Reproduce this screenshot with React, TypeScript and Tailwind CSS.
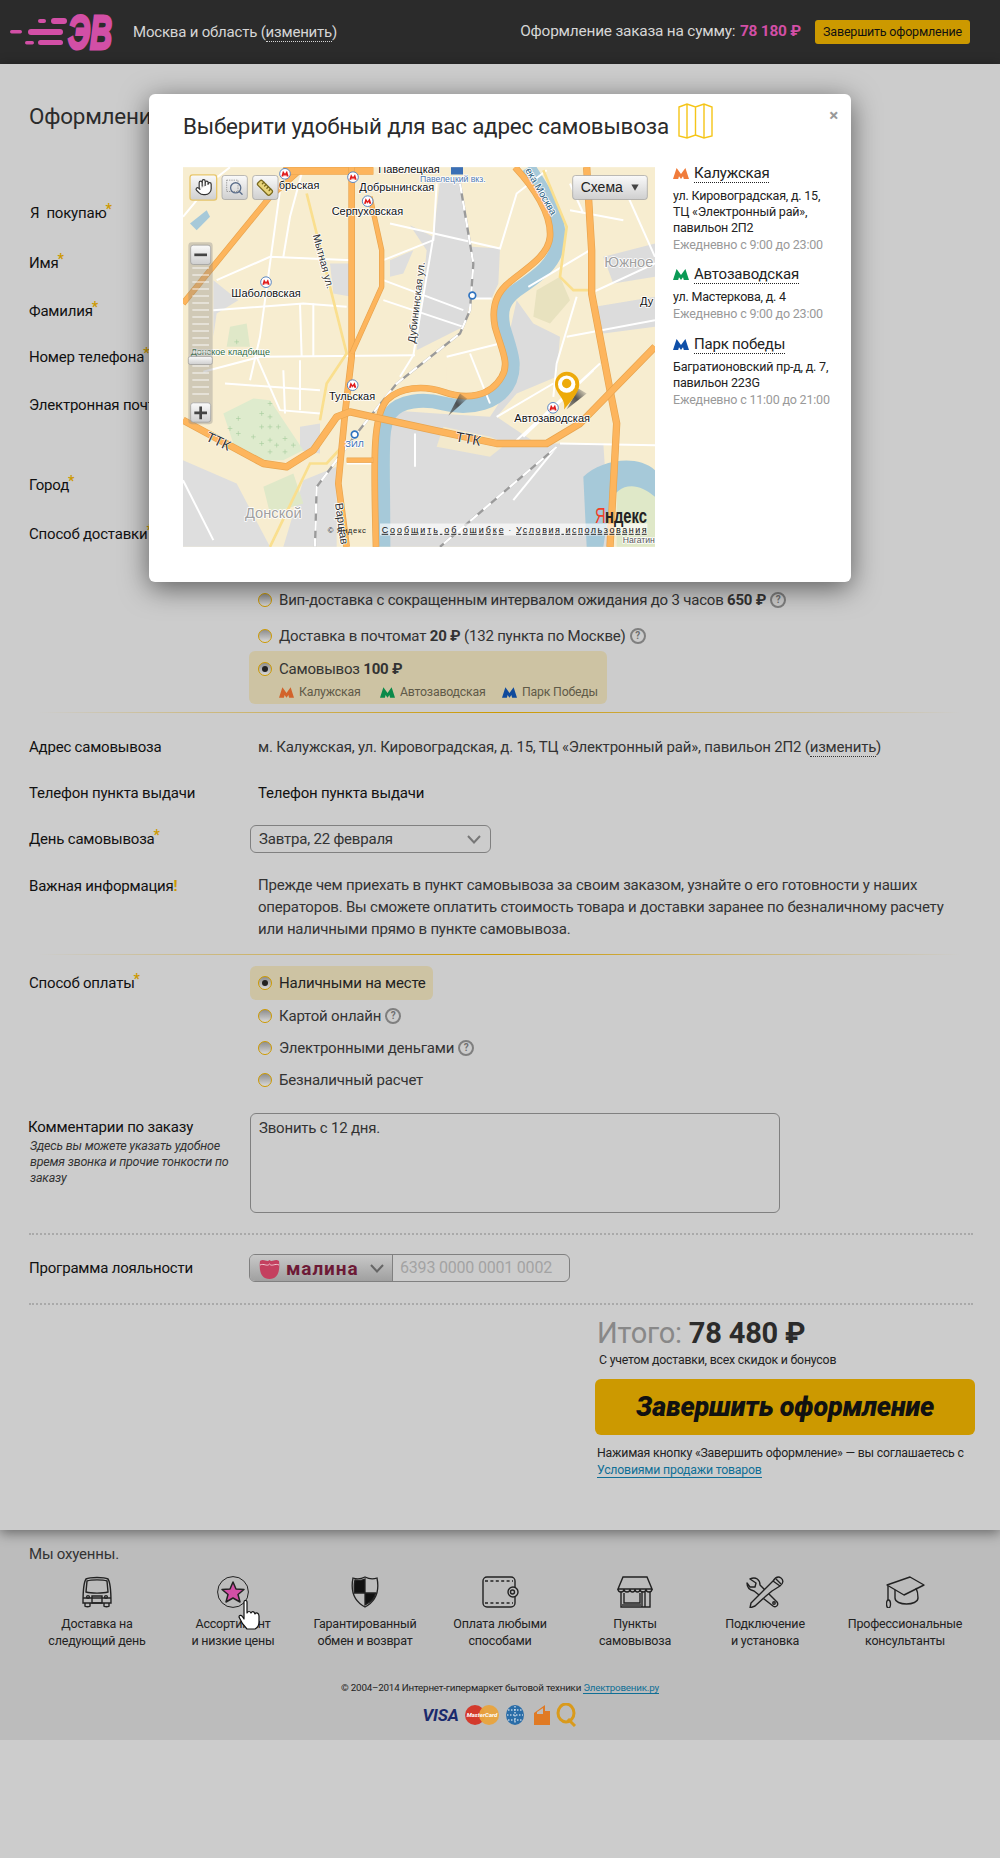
import { Hand, Search, Ruler } from 'lucide-react';
import React from 'react';

function Star() {
  return <sup className="ml-[-1px] text-[14px] font-bold top-[-4px] text-[#cc9900]">*</sup>;
}

function MetroIcon({ color, className }: { color: string; className?: string }) {
  return (
    <svg viewBox="0 0 16 11" className={className} fill={color}>
      <path d="M0 11 L3.6 0 L8 6 L12.4 0 L16 11 H10.8 L10 8.2 L8 11 L6 8.2 L5.2 11 Z" />
    </svg>
  );
}

function Radio({ checked }: { checked?: boolean }) {
  return (
    <span className="flex h-[14px] w-[14px] shrink-0 items-center justify-center rounded-full border border-[#cc9900] bg-gradient-to-b from-[#8f8f8f] to-[#d8d8d8]">
      {checked && <span className="h-[6px] w-[6px] rounded-full bg-[#222]" />}
    </span>
  );
}

function HelpMark() {
  return (
    <span className="-ml-[3px] flex h-[16px] w-[16px] items-center justify-center rounded-full border-2 border-[#7f7f7f] text-[10px] font-bold leading-none text-[#6f6f6f]">
      ?
    </span>
  );
}

function Road({ d, w = 12 }: { d: string; w?: number }) {
  return (
    <g fill="none" strokeLinejoin="round">
      <path d={d} stroke="#e8a44e" strokeWidth={w + 4} />
      <path d={d} stroke="#fdb55d" strokeWidth={w} />
    </g>
  );
}

function Metro({ x, y }: { x: number; y: number }) {
  return (
    <g>
      <circle cx={x} cy={y} r={16} fill="#fff" stroke="#5c86c0" strokeWidth={3} />
      <path
        d={`M${x - 11} ${y + 8} L${x - 6} ${y - 9} L${x} ${y} L${x + 6} ${y - 9} L${x + 11} ${y + 8} H${x + 5} L${x + 3} ${y + 2} L${x} ${y + 8} L${x - 3} ${y + 2} L${x - 5} ${y + 8} Z`}
        fill="#e01b1b"
      />
    </g>
  );
}

function Label({ x, y, children, size = 33, fill = '#111', anchor, rotate }: { x: number; y: number; children: string; size?: number; fill?: string; anchor?: 'middle'; rotate?: number }) {
  return (
    <text
      x={x}
      y={y}
      fontSize={size}
      fill={fill}
      textAnchor={anchor}
      stroke="#fff"
      strokeWidth={5}
      paintOrder="stroke"
      strokeLinejoin="round"
      transform={rotate ? `rotate(${rotate} ${x} ${y})` : undefined}
    >
      {children}
    </text>
  );
}

function MapPicture() {
  const whites = [
    'M39 200 L130 90 L180 51',
    'M330 120 L270 560 L240 690',
    'M140 390 L300 320 L545 330',
    'M130 480 L400 460 L530 470',
    'M100 665 L270 620 L735 615',
    'M260 620 L330 780 L450 790',
    'M165 700 L450 720',
    'M340 660 L345 790 M390 630 L390 780 M430 460 L430 620 M390 460 L395 620',
    'M640 330 L790 270 L800 100 M790 260 L730 615 L690 680',
    'M640 390 L880 480 M640 450 L880 530',
    'M660 220 L990 295 L1040 130 L1130 60',
    'M905 445 L965 445',
    'M830 620 L990 580 M900 610 L960 760',
    'M1075 410 L1260 300 M1260 430 L1455 340',
    'M1220 440 L1160 640 L1150 740',
    'M1190 560 L1455 510',
    'M1290 640 L1040 870 M1270 660 L1060 860',
    'M1170 880 L1455 885',
    'M980 800 L1150 700',
    'M1370 130 L1455 320',
    'M1200 100 L1240 190 M1200 180 L1360 210',
    'M39 990 L130 1170',
    'M1160 890 L1030 1050',
    'M735 850 L735 950',
    'M530 940 L610 940',
    'M400 51 L360 200 L340 320',
  ];
  const crosses = [
    [275, 790], [300, 760], [300, 800], [275, 830], [300, 830], [325, 830], [250, 860], [275, 880], [300, 870], [345, 865], [320, 885], [370, 885], [300, 905], [345, 905], [180, 835], [205, 805], [205, 850], [200, 575],
  ];
  return (
    <svg viewBox="39 51 1416 1139" className="h-[380px] w-[472px] shrink-0" fontFamily="Liberation Sans, sans-serif" letterSpacing="0">
      <defs>
        <linearGradient id="btn" x1="0" y1="0" x2="0" y2="1">
          <stop offset="0" stopColor="#fafafa" />
          <stop offset="1" stopColor="#cfcfcf" />
        </linearGradient>
        <linearGradient id="pinShadow" x1="1" y1="0" x2="0" y2="1">
          <stop offset="0" stopColor="#444" stopOpacity="0" />
          <stop offset="0.5" stopColor="#444" stopOpacity="0.9" />
          <stop offset="1" stopColor="#444" stopOpacity="0.5" />
        </linearGradient>
      </defs>
      <rect x="39" y="51" width="1416" height="1139" fill="#f7edd0" />
      <path d="M810 90 L870 90 L905 290 L990 295 L985 400 L965 445 L905 445 L880 530 L740 600 L770 300 L720 225 L790 260 Z" fill="#dcdcdc" />
      <path d="M130 390 L205 450 L140 490 L130 560 Z M480 340 L545 340 L545 440 L490 430 Z M660 330 L730 300 L700 370 L660 380 Z" fill="#dedede" />
      <path d="M1040 450 L1090 520 L1170 560 L1160 680 L1040 730 L980 800 L1100 880 L1300 880 L1320 1190 L660 1190 L660 780 L800 790 L960 800 L1000 740 L1050 650 L1020 540 Z" fill="#dcdcdc" />
      <path d="M39 930 L200 1000 L300 1190 L39 1190 Z M390 830 L450 820 L450 910 L390 900 Z M400 990 L500 950 L500 1190 L340 1190 Z" fill="#dedede" />
      <path d="M1300 320 L1455 280 L1455 380 L1330 400 Z M1275 470 L1455 440 L1455 530 L1300 550 Z" fill="#dcdcdc" />
      <path d="M830 650 L980 620 L1000 680 L950 730 L880 750 L830 720 Z" fill="#f7edd0" />
      <path d="M820 830 L960 860 L1010 880 L960 920 L800 890 Z" fill="#f3e9cc" />
      <path d="M160 790 L250 745 L300 750 L400 900 L340 930 L280 930 L190 880 Z" fill="#deebcd" />
      <path d="M180 530 L230 520 L240 590 L170 590 Z M280 1010 L370 970 L400 1060 L300 1090 Z M1340 1000 L1455 990 L1455 1190 L1340 1190 Z" fill="#dfe8c8" />
      {crosses.map(([x, y]) => (
        <path key={`${x}-${y}`} d={`M${x - 7} ${y} H${x + 7} M${x} ${y - 7} V${y + 7}`} stroke="#a9cfa0" strokeWidth="2" />
      ))}
      <path d="M1100 420 L1170 380 L1200 450 L1140 520 L1090 500 Z" fill="#e8e2bf" />
      <path d="M60 220 L110 180 L120 200 L80 240 Z" fill="#a6c9d9" />
      <path d="M1240 980 C1290 930 1400 910 1455 960 L1455 1040 C1400 990 1340 1000 1320 1060 L1300 1190 L1250 1190 Z" fill="#a6c9d9" />
      <path d="M1075 51 C1120 120 1170 190 1165 270 C1160 340 1100 380 1040 420 C1000 450 990 480 1000 530 C1020 600 1040 640 1020 690 C990 760 900 780 820 760 C760 745 690 750 660 790 C630 830 640 900 640 1190" fill="none" stroke="#a6c9d9" strokeWidth={42} />
      {whites.map((d) => (
        <path key={d} d={d} fill="none" stroke="#fff" strokeWidth={6} />
      ))}
      <path d="M870 100 L910 340 L900 480 L870 550 L680 700 L560 850 L440 1010 L435 1190" fill="none" stroke="#9a9a9a" strokeWidth={7} />
      <path d="M870 100 L910 340 L900 480 L870 550 L680 700 L560 850 L440 1010 L435 1190" fill="none" stroke="#fff" strokeWidth={7} strokeDasharray="30 22" />
      <path d="M1160 890 L810 1190" fill="none" stroke="#9a9a9a" strokeWidth={7} />
      <path d="M1160 890 L810 1190" fill="none" stroke="#fff" strokeWidth={7} strokeDasharray="30 22" />
      <g fill="none" stroke="#fadf8e" strokeWidth={8}>
        <path d="M410 130 L530 610 L470 700 L450 810" />
        <path d="M525 880 L470 940 L420 940 L300 1190" />
        <path d="M1120 60 L1190 230 L1170 380 L1210 420 L1260 420" />
      </g>
      <Road d="M39 460 L300 140 L400 51" w={14} />
      <Road d="M340 62 L610 62" w={20} />
      <Road d="M545 51 L545 620 L525 790 L505 1000 L530 1190" w={16} />
      <Road d="M600 140 L635 300 L635 410 L545 610" />
      <Road d="M1035 51 C1090 110 1145 190 1140 260 C1135 320 1060 360 1020 395 C975 430 965 480 975 530 C995 600 1020 640 995 680 C960 740 890 750 820 725 C760 705 690 710 650 750 C610 800 610 900 618 1190" w={16} />
      <Road d="M1250 51 L1265 300 L1265 430 L1320 720 L1340 820 L1320 1190" w={18} />
      <Road d="M530 930 L610 930" />
      <Road d="M39 810 L280 940 L350 950 L430 900 L500 800 L540 785 L790 840 L980 880 L1130 880 L1230 820 L1455 590" w={18} />
      <path d="M870 730 L892 746 L835 797 Z" fill="url(#pinShadow)" />
      <Metro x={345} y={71} />
      <Metro x={549} y={81} />
      <Metro x={593} y={153} />
      <Metro x={288} y={396} />
      <Metro x={548} y={705} />
      <Metro x={1149} y={773} />
      <rect x="843" y="51" width="36" height="22" fill="#3b6fb5" />
      <Label x={625} y={68}>Павелецкая</Label>
      <Label x={326} y={117}>брьская</Label>
      <Label x={568} y={122}>Добрынинская</Label>
      <Label x={485} y={196}>Серпуховская</Label>
      <Label x={184} y={440}>Шаболовская</Label>
      <Label x={477} y={749}>Тульская</Label>
      <Label x={1033} y={817}>Автозаводская</Label>
      <Label x={750} y={97} size={26} fill="#4f78b0">Павелецкий вкз.</Label>
      <Label x={428} y={255} size={32} fill="#333" rotate={75}>Мытная ул.</Label>
      <Label x={735} y={580} size={32} fill="#333" rotate={-83}>Дубининская ул.</Label>
      <Label x={1065} y={60} size={30} fill="#1f5c80" rotate={60}>ека Москва</Label>
      <Label x={62} y={614} size={27} fill="#2f6b3c">Донское кладбище</Label>
      <Label x={526} y={892} size={28} fill="#3b6fb5">ЗИЛ</Label>
      <Label x={495} y={1060} size={34} fill="#333" rotate={82}>Варшав</Label>
      <Label x={1303} y={352} size={44} fill="#a0a0a0">Южное</Label>
      <Label x={1410} y={466} size={33}>Ду</Label>
      <Label x={225} y={1105} size={44} fill="#a0a0a0">Донской</Label>
      <Label x={1358} y={1180} size={26} fill="#555">Нагатин</Label>
      <text x="105" y="870" fontSize="42" fill="#333" stroke="#fff" strokeWidth="3" paintOrder="stroke" transform="rotate(25 105 870)">ТТК</text>
      <text x="855" y="873" fontSize="42" fill="#333" stroke="#fff" strokeWidth="3" paintOrder="stroke" transform="rotate(10 855 873)">ТТК</text>
      <circle cx="907" cy="436" r="10" fill="#fff" stroke="#2f73c0" strokeWidth="5" />
      <circle cx="554" cy="853" r="10" fill="#fff" stroke="#2f73c0" strokeWidth="5" />
      <path d="M1225 715 L1250 730 L1190 777 Z" fill="url(#pinShadow)" />
      <path d="M1190 665 C1170 665 1155 682 1155 702 C1155 730 1190 745 1182 778 C1195 760 1228 730 1228 702 C1228 682 1212 665 1190 665 Z" fill="#edaa0a" />
      <circle cx="1190" cy="702" r="26" fill="#fff" />
      <circle cx="1190" cy="700" r="14" fill="#edaa0a" />
      <rect x="630" y="1120" width="802" height="36" fill="#fff" opacity="0.65" />
      <text x="473" y="1148" fontSize="23" fill="#222" letterSpacing="2">© Яндекс</text>
      <text x="635" y="1148" fontSize="27" fill="#111" textDecoration="underline" textLength="366">Сообщить об ошибке</text>
      <text x="1015" y="1148" fontSize="27" fill="#555">·</text>
      <text x="1038" y="1148" fontSize="27" fill="#111" textDecoration="underline" textLength="392">Условия использования</text>
      <text x="1275" y="1118" fontSize="66" fontWeight="400" fill="#f0402a" textLength="32" lengthAdjust="spacingAndGlyphs">Я</text>
      <text x="1305" y="1118" fontSize="60" fontWeight="700" fill="#222" textLength="126" lengthAdjust="spacingAndGlyphs">ндекс</text>

      <g stroke="#9c9c9c" strokeWidth="2">
        <rect x="60" y="74" width="80" height="76" rx="8" fill="url(#btn)" stroke="#e8c66a" strokeWidth="4" />
        <rect x="156" y="76" width="76" height="72" rx="8" fill="url(#btn)" />
        <rect x="248" y="76" width="76" height="72" rx="8" fill="url(#btn)" />
        <rect x="1208" y="76" width="224" height="72" rx="8" fill="url(#btn)" />
      </g>
      <Hand x={74} y={84} width={54} height={54} strokeWidth={1.6} color="#333" fill="#fff" />
      <rect x="170" y="90" width="34" height="34" fill="none" stroke="#777" strokeWidth="2" strokeDasharray="4 3" />
      <Search x={176} y={92} width={46} height={46} strokeWidth={2} color="#5a6d8a" />
      <Ruler x={258} y={86} width={54} height={54} strokeWidth={1.8} color="#7a6a1f" fill="#e8d47a" />
      <text x="1232" y="127" fontSize="42" fill="#222">Схема</text>
      <path d="M1384 103 H1406 L1395 122 Z" fill="#444" />
      <rect x="55" y="276" width="73" height="546" rx="10" fill="#888" opacity="0.35" />
      {Array.from({ length: 19 }, (_, i) => (
        <rect key={i} x="67" y={352 + i * 21} width="50" height="3" fill="#fff" opacity="0.9" />
      ))}
      <rect x="62" y="285" width="60" height="58" rx="8" fill="url(#btn)" stroke="#999" strokeWidth="2" />
      <rect x="73" y="310" width="38" height="8" fill="#444" />
      <rect x="62" y="758" width="60" height="58" rx="8" fill="url(#btn)" stroke="#999" strokeWidth="2" />
      <path d="M73 784 H111 V792 H73 Z M88 769 H96 V807 H88 Z" fill="#444" />
      <rect x="55" y="619" width="72" height="24" rx="6" fill="url(#btn)" stroke="#999" strokeWidth="2" />
    </svg>
  );
}

function Stop({ color, name, lines, hours, className }: { color: string; name: string; lines: string[]; hours: string; className?: string }) {
  return (
    <div className={className}>
      <div className="flex h-[22px] items-center text-[15px] text-[#222]">
        <MetroIcon color={color} className="mr-[5px] h-[11px] w-[16px]" />
        <span className="border-b border-dotted border-[#222] leading-[18px]">{name}</span>
      </div>
      <div className="mt-[4px] whitespace-nowrap text-[12.5px] leading-[16px] text-[#222]">
        {lines.map((l) => (
          <div key={l}>{l}</div>
        ))}
        <div className="mt-[1px] text-[#999]">{hours}</div>
      </div>
    </div>
  );
}

function Modal() {
  return (
    <div className="absolute left-[149px] top-[94px] z-20 h-[488px] w-[702px] rounded-md bg-white pl-[34px] shadow-[0_6px_28px_rgba(0,0,0,0.55)]">
      <span className="absolute right-[13px] top-[9px] text-[17px] font-bold text-[#999]">×</span>
      <div className="flex h-[73px] items-start">
        <h2 className="mt-[16px] whitespace-nowrap text-[22.4px] leading-[32px] text-[#2b2b2b]">Выберити удобный для вас адрес самовывоза</h2>
        <svg viewBox="0 0 35 36" className="ml-[9px] mt-[9px] h-[36px] w-[35px]" fill="none" stroke="#f5c518" strokeWidth="1.4">
          <path d="M1 4 L9 1 L17.5 4 L26 1 L34 4 V33 L26 35 L17.5 32 L9 35 L1 33 Z M9 1 V35 M17.5 4 V32 M26 1 V35" />
        </svg>
      </div>
      <div className="flex">
        <MapPicture />
        <div className="ml-[18px] w-[165px]">
          <Stop color="#f07c3c" name="Калужская" lines={['ул. Кировоградская, д. 15,', 'ТЦ «Электронный рай»,', 'павильон 2П2']} hours="Ежедневно с 9:00 до 23:00" className="-mt-[5px]" />
          <Stop color="#0a9a55" name="Автозаводская" lines={['ул. Мастеркова, д. 4']} hours="Ежедневно с 9:00 до 23:00" className="mt-[10px]" />
          <Stop color="#0f4fa8" name="Парк победы" lines={['Багратионовский пр-д, д. 7,', 'павильон 223G']} hours="Ежедневно с 11:00 до 21:00" className="mt-[11px]" />
        </div>
      </div>
    </div>
  );
}

function FieldLabel({ children, mark }: { children: React.ReactNode; mark?: boolean }) {
  return (
    <div className="w-[229px] shrink-0 text-[15px] leading-[24px] text-[#111]">
      {children}
      {mark && <Star />}
    </div>
  );
}

function Divider({ className }: { className: string }) {
  return <div className={`h-px bg-gradient-to-r from-transparent via-[#cc9900] to-transparent ${className}`} />;
}

function Dotted({ className }: { className: string }) {
  return <div className={`h-[2px] border-t-2 border-dotted border-[#a9a9a9] ${className}`} />;
}

function RadioRow({ checked, children, className }: { checked?: boolean; children: React.ReactNode; className?: string }) {
  return (
    <div className={`ml-[229px] flex h-[24px] items-center gap-[7px] text-[15px] text-[#333] ${className ?? ''}`}>
      <Radio checked={checked} />
      {children}
    </div>
  );
}

function BusIcon() {
  return (
    <svg viewBox="0 0 32 32" className="h-[32px] w-[32px]" fill="none" stroke="#222" strokeWidth="1.4">
      <path d="M5 3 C9 1 23 1 27 3 C29 6 30 12 30 27 H2 C2 12 3 6 5 3 Z" />
      <path d="M6 5 C10 3.5 22 3.5 26 5 L27 16 C22 17.5 10 17.5 5 16 Z" />
      <path d="M11 20 H21 V27 H11 Z M2 22 H30" />
      <circle cx="7" cy="21" r="1.4" />
      <circle cx="25" cy="21" r="1.4" />
      <path d="M4 27 V30 C4 31 9 31 9 30 V27 M23 27 V30 C23 31 28 31 28 30 V27" />
    </svg>
  );
}

function StarIcon() {
  return (
    <svg viewBox="0 0 32 32" className="h-[32px] w-[32px]" fill="none" stroke="#222" strokeWidth="1">
      <circle cx="16" cy="16" r="15.4" />
      <path d="M16 6 L19 13 L27 13.5 L21 18.5 L23 26 L16 22 L9 26 L11 18.5 L5 13.5 L13 13 Z" fill="#d24fa6" stroke="#222" strokeWidth="1.5" strokeLinejoin="round" />
    </svg>
  );
}

function ShieldIcon() {
  return (
    <svg viewBox="0 0 28 32" className="h-[32px] w-[28px]" fill="none" stroke="#222" strokeWidth="1.3">
      <path d="M14 1 C18 3 23 3 26 2 C28 12 27 24 14 31 C1 24 0 12 2 2 C5 3 10 3 14 1 Z" />
      <path d="M14 3 V17 H3.5 C3 12 3 8 4 4 C7 4.5 11 4.5 14 3 Z M14 17 H24.5 C24 22 20 26 14 29 Z" fill="#111" />
    </svg>
  );
}

function WalletIcon() {
  return (
    <svg viewBox="0 0 37 32" className="h-[32px] w-[37px]" fill="none" stroke="#222" strokeWidth="1.4">
      <rect x="1" y="1" width="32" height="30" rx="4" />
      <path d="M3 5 H31 M3 27 H31" strokeDasharray="3 2.4" />
      <rect x="26" y="11" width="10" height="10" rx="5" fill="#bcbcbc" />
      <circle cx="30.5" cy="16" r="2" />
    </svg>
  );
}

function ShopIcon() {
  return (
    <svg viewBox="0 0 36 32" className="h-[32px] w-[36px]" fill="none" stroke="#222" strokeWidth="1.4">
      <path d="M6 1 H30 L35 13 H1 Z" />
      <path d="M1 13 C1 17 7 17 7 13 C7 17 13 17 13 13 C13 17 18 17 18 13 C18 17 23 17 23 13 C23 17 29 17 29 13 C29 17 35 17 35 13" />
      <path d="M4 16 V31 H33 V16 M7 17 V27 H23 V17 M25 15 V31 M28 16 V31" />
      <path d="M5 29 H24" />
    </svg>
  );
}

function ToolsIcon() {
  return (
    <svg viewBox="0 0 38 32" className="h-[32px] w-[38px]" fill="none" stroke="#222" strokeWidth="1.4" strokeLinejoin="round">
      <path d="M4 3 L10 7 L9 11 L4 11 L1 7 C1 11 3 14 8 15 L27 30 C30 32 33 29 31 26 L14 9 C14 4 10 0 4 3 Z" />
      <circle cx="28" cy="27" r="1.2" />
      <path d="M35 2 C38 4 37 8 34 10 L26 15 L20 20 L9 30 L4 32 L5 27 L15 17 L21 11 L27 5 C29 2 32 0 35 2 Z" fill="#bcbcbc" />
      <path d="M27 5 L34 10 M30 3 L35 8" />
    </svg>
  );
}

function CapIcon() {
  return (
    <svg viewBox="0 0 39 32" className="h-[32px] w-[39px]" fill="none" stroke="#222" strokeWidth="1.4" strokeLinejoin="round">
      <path d="M1 9 L24 1 L38 9 L18 19 Z" />
      <path d="M9 14 V22 C9 30 32 30 32 22 C32 18 31 14 30 12" />
      <path d="M2 10 V24" />
      <ellipse cx="2.5" cy="28" rx="2" ry="4" />
    </svg>
  );
}

const perks = [
  { icon: <BusIcon />, lines: ['Доставка на', 'следующий день'] },
  { icon: <StarIcon />, lines: ['Ассортимент', 'и низкие цены'] },
  { icon: <ShieldIcon />, lines: ['Гарантированный', 'обмен и возврат'] },
  { icon: <WalletIcon />, lines: ['Оплата любыми', 'способами'] },
  { icon: <ShopIcon />, lines: ['Пункты', 'самовывоза'] },
  { icon: <ToolsIcon />, lines: ['Подключение', 'и установка'] },
  { icon: <CapIcon />, lines: ['Профессиональные', 'консультанты'] },
];

function Logo() {
  return (
    <svg viewBox="0 0 115 64" className="h-[64px] w-[115px] shrink-0" fill="#d24fa6">
      <rect x="10" y="30" width="12" height="3.5" rx="1.7" />
      <rect x="28" y="29" width="35" height="6" rx="3" />
      <rect x="38" y="19" width="8" height="4" rx="2" />
      <rect x="51" y="18" width="16" height="6" rx="3" />
      <rect x="25" y="41" width="9" height="3.5" rx="1.7" />
      <rect x="38" y="40" width="25" height="5" rx="2.5" />
      <text x="68" y="49" fontSize="48" fontWeight="700" fontStyle="italic" fontFamily="Liberation Sans, sans-serif" stroke="#d24fa6" strokeWidth="3" textLength="44" lengthAdjust="spacingAndGlyphs">ЭВ</text>
    </svg>
  );
}

export default function App() {
  return (
    <div className="relative min-h-[1858px] bg-[#cccccc] font-[Roboto,sans-serif] tracking-[-0.2px] text-[#222]">
      <header className="flex h-16 items-center bg-[#2b2b2b] pr-[30px]">
        <Logo />
        <div className="ml-[18px] text-[15px] text-[#d6d6d6]">
          Москва и область (<span className="border-b border-dotted border-[#d6d6d6]">изменить</span>)
        </div>
        <div className="ml-auto text-[15.4px] text-[#d6d6d6]">
          Оформление заказа на сумму: <b className="ml-[1px] font-bold text-[#d24fa6]">78 180 ₽</b>
        </div>
        <button className="ml-[14px] h-[24px] w-[155px] whitespace-nowrap rounded-[3px] bg-[#cc9900] text-[12.5px] text-[#111]">Завершить оформление</button>
      </header>

      <main className="relative z-10 h-[1466px] bg-[#cccccc] px-[29px] pt-[36px] shadow-[0_3px_12px_rgba(0,0,0,0.45)]">
        <h1 className="text-[22.4px] leading-[32px] text-[#2b2b2b]">Оформление заказа</h1>
        <div className="mt-[69px] flex"><FieldLabel mark><span className="ml-[1px]">Я&nbsp; покупаю</span></FieldLabel></div>
        <div className="mt-[26px] flex"><FieldLabel mark>Имя</FieldLabel></div>
        <div className="mt-[24px] flex"><FieldLabel mark>Фамилия</FieldLabel></div>
        <div className="mt-[22px] flex"><FieldLabel mark>Номер телефона</FieldLabel></div>
        <div className="mt-[24px] flex"><FieldLabel>Электронная почта</FieldLabel></div>
        <div className="mt-[56px] flex"><FieldLabel mark>Город</FieldLabel></div>
        <div className="mt-[25px] flex"><FieldLabel mark>Способ доставки</FieldLabel></div>

        <RadioRow className="mt-[42px]">
          <span>Вип-доставка с сокращенным интервалом ожидания до 3 часов <b>650 ₽</b></span>
          <HelpMark />
        </RadioRow>
        <RadioRow className="mt-[12px]">
          <span>Доставка в почтомат <b>20 ₽</b> (132 пункта по Москве)</span>
          <HelpMark />
        </RadioRow>
        <div className="ml-[220px] mt-[3px] h-[53px] w-[358px] rounded-md bg-[#cdc3a3] pl-[9px] pt-[6px]">
          <div className="flex h-[24px] items-center gap-[7px] text-[15px] text-[#333]">
            <Radio checked />
            <span>Самовывоз <b>100 ₽</b></span>
          </div>
          <div className="mt-[1px] flex items-center pl-[21px] text-[12.3px] leading-[20px] text-[#5f5a48]">
            <MetroIcon color="#d2632b" className="mr-[5px] h-[11px] w-[15px]" />
            <span className="w-[81px]">Калужская</span>
            <MetroIcon color="#0a8a4a" className="mr-[5px] h-[11px] w-[15px]" />
            <span className="w-[102px]">Автозаводская</span>
            <MetroIcon color="#0f4a9c" className="mr-[5px] h-[11px] w-[15px]" />
            <span>Парк Победы</span>
          </div>
        </div>
        <Divider className="mx-[10px] mt-[8px]" />

        <div className="mt-[22px] flex">
          <FieldLabel>Адрес самовывоза</FieldLabel>
          <div className="text-[15px] leading-[24px] text-[#333]">
            м. Калужская, ул. Кировоградская, д. 15, ТЦ «Электронный рай», павильон 2П2 (<span className="border-b border-dotted border-[#333]">изменить</span>)
          </div>
        </div>
        <div className="mt-[22px] flex">
          <FieldLabel>Телефон пункта выдачи</FieldLabel>
          <div className="text-[15px] leading-[24px] text-[#111]">Телефон пункта выдачи</div>
        </div>
        <div className="mt-[20px] flex items-center">
          <FieldLabel mark>День самовывоза</FieldLabel>
          <div className="-ml-[8px] flex h-[28px] w-[241px] items-center justify-between rounded-md border border-[#808080] pl-[8px] pr-[9px] text-[15px] text-[#333]">
            Завтра, 22 февраля
            <svg viewBox="0 0 14 9" className="h-[9px] w-[14px]" fill="none" stroke="#777" strokeWidth="2">
              <path d="M1 1 L7 7.5 L13 1" />
            </svg>
          </div>
        </div>
        <div className="mt-[21px] flex">
          <FieldLabel>
            Важная информация<b className="text-[#cc9900]">!</b>
          </FieldLabel>
          <div className="whitespace-nowrap text-[15px] leading-[22px] text-[#333]">
            Прежде чем приехать в пункт самовывоза за своим заказом, узнайте о его готовности у наших
            <br />
            операторов. Вы сможете оплатить стоимость товара и доставки заранее по безналичному расчету
            <br />
            или наличными прямо в пункте самовывоза.
          </div>
        </div>
        <Divider className="mx-[10px] mt-[14px]" />

        <div className="relative mt-[11px]">
          <div className="absolute left-0 top-[5px]">
            <FieldLabel mark>Способ оплаты</FieldLabel>
          </div>
          <div className="ml-[221px] flex h-[34px] w-[183px] items-center gap-[7px] whitespace-nowrap rounded-md bg-[#cdc3a3] pl-[8px] text-[15px] text-[#222]">
            <Radio checked />
            Наличными на месте
          </div>
        </div>
        <RadioRow className="mt-[4px]">
          Картой онлайн
          <HelpMark />
        </RadioRow>
        <RadioRow className="mt-[8px]">
          Электронными деньгами
          <HelpMark />
        </RadioRow>
        <RadioRow className="mt-[8px]">Безналичный расчет</RadioRow>

        <div className="mt-[21px] flex">
          <div className="w-[221px] shrink-0 pt-[2px]">
            <div className="-ml-[1px] text-[15px] leading-[24px] text-[#111]">Комментарии по заказу</div>
            <div className="ml-[1px] mt-[-1px] w-[205px] text-[12.5px] italic leading-[16px] text-[#333]">
              Здесь вы можете указать удобное время звонка и прочие тонкости по заказу
            </div>
          </div>
          <div className="h-[100px] w-[530px] rounded-md border border-[#808080] px-[8px] pt-[3px] text-[15px] leading-[22px] text-[#333]">
            Звонить с 12 дня.
          </div>
        </div>
        <Dotted className="mt-[20px] w-[944px]" />

        <div className="mt-[19px] flex items-center">
          <div className="w-[220px] shrink-0 text-[15px] text-[#111]">Программа лояльности</div>
          <div className="flex h-[28px] w-[321px] overflow-hidden rounded-md border border-[#808080]">
            <div className="flex w-[142px] items-center bg-gradient-to-b from-[#c8c8c8] to-[#a0a0a0] pl-[9px]">
              <svg viewBox="0 0 21 21" className="h-[21px] w-[21px]">
                <path d="M1 3 C5 0 8 5 10.5 2 C13 5 16 0 20 3 C21 11 20 21 10.5 21 C1 21 0 11 1 3 Z" fill="#c4405f" />
                <path d="M1 7 C5 5 8 9 10.5 6 C13 9 16 5 20 7" fill="none" stroke="#f2c9d2" strokeWidth="1" />
              </svg>
              <span className="ml-[6px] text-[19px] font-bold leading-none tracking-[0.9px] text-[#6d1a36]">малина</span>
              <svg viewBox="0 0 14 9" className="ml-auto mr-[8px] h-[9px] w-[14px]" fill="none" stroke="#666" strokeWidth="2">
                <path d="M1 1 L7 7.5 L13 1" />
              </svg>
            </div>
            <div className="flex flex-1 items-center border-l border-[#808080] pl-[7px] text-[16px] text-[#a3a3a3]">6393 0000 0001 0002</div>
          </div>
        </div>
        <Dotted className="mt-[21px] w-[944px]" />

        <div className="ml-[566px] mt-[10px] w-[390px]">
          <div className="ml-[2px] text-[29px] leading-[36px] text-[#888]">
            Итого: <b className="font-bold text-[#2b2b2b]">78 480 ₽</b>
          </div>
          <div className="ml-[4px] text-[12.3px] leading-[18px] text-[#222]">С учетом доставки, всех скидок и бонусов</div>
          <button className="mt-[10px] h-[56px] w-[380px] rounded-md bg-[#cc9900] text-[27px] font-black italic text-[#111]">Завершить оформление</button>
          <div className="ml-[2px] mt-[10px] whitespace-nowrap text-[12.3px] leading-[17px] text-[#222]">
            Нажимая кнопку «Завершить оформление» — вы соглашаетесь с
            <br />
            <span className="border-b border-[#0f6f96] text-[#0f6f96]">Условиями продажи товаров</span>
          </div>
        </div>
      </main>

      <footer className="relative h-[210px] bg-[#bcbcbc] px-[29px] pt-[13px]">
        <div className="text-[15px] leading-[22px] text-[#333]">Мы охуенны.</div>
        <div className="mt-[11px] grid grid-cols-[136px_136px_128px_142px_128px_132px_148px]">
          {perks.map((p, i) => (
            <div key={p.lines[0]} className="relative flex flex-col items-center text-center text-[12.5px] leading-[16.5px] text-[#222]">
              <div className="mb-[8px] flex h-[32px] items-center">{p.icon}</div>
              {p.lines.map((l) => (
                <div key={l}>{l}</div>
              ))}
              {i === 1 && (
                <svg viewBox="0 0 24 30" className="absolute left-[73px] top-[24px] h-[30px] w-[24px]" fill="#fff" stroke="#111" strokeWidth="1.2" strokeLinejoin="round">
                  <path d="M6 2 C6 0 9 0 9 2 V13 C10 11 12 11 13 13 C14 11 16 11 17 14 C18 12 21 13 21 16 V22 C21 26 19 28 17 29 H9 C7 27 3 22 1 17 C1 15 3 15 4 16 L6 19 Z" />
                </svg>
              )}
            </div>
          ))}
        </div>
        <div className="mt-[32px] text-center text-[9.8px] leading-[14px] text-[#222]">
          © 2004–2014 Интернет-гипермаркет бытовой техники <span className="border-b border-[#0f6f96] text-[#0f6f96]">Электровеник.ру</span>
        </div>
        <div className="mt-[8px] flex items-center justify-center gap-[6px]">
          <span className="text-[17px] font-bold italic leading-[20px] text-[#1a2a6c]">VISA</span>
          <svg viewBox="0 0 34 20" className="h-[20px] w-[34px]">
            <circle cx="10" cy="10" r="10" fill="#d33a2c" />
            <circle cx="24" cy="10" r="10" fill="#e8a33d" fillOpacity="0.95" />
            <text x="17" y="12" fontSize="6" fontWeight="700" fontStyle="italic" fill="#fff" textAnchor="middle" letterSpacing="0">MasterCard</text>
          </svg>
          <svg viewBox="0 0 20 20" className="h-[20px] w-[20px]">
            <ellipse cx="10" cy="10" rx="9" ry="10" fill="#2a6da8" />
            <path d="M3 5 L17 5 M2 10 L18 10 M3 15 L17 15 M10 1 V19" stroke="#fff" strokeWidth="1" strokeDasharray="1.5 1.5" />
          </svg>
          <svg viewBox="0 0 16 20" className="ml-[3px] h-[20px] w-[16px]" fill="#e07a24">
            <path d="M0 8 L11 0 V6 H16 V20 H0 Z" />
            <path d="M3 7 L9 3 V9 H3 Z" fill="#bcbcbc" />
          </svg>
          <svg viewBox="0 0 22 24" className="h-[24px] w-[22px]" fill="none" stroke="#d99a1c" strokeWidth="3">
            <ellipse cx="10" cy="10" rx="8" ry="9" />
            <path d="M12 16 L19 23" />
          </svg>
        </div>
      </footer>

      <Modal />
    </div>
  );
}
